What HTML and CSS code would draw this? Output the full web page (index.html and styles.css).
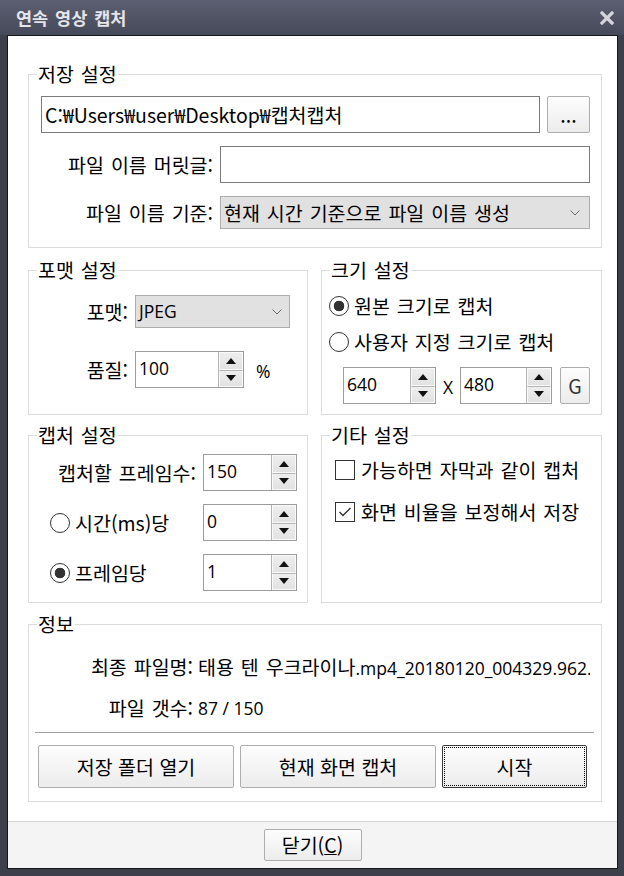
FILE: index.html
```html
<!DOCTYPE html>
<html lang="ko">
<head>
    <meta charset="UTF-8">
    <meta name="viewport" content="width=device-width, initial-scale=1.0">
    <title>연속 영상 캡처</title>
    <link rel="stylesheet" href="styles.css">
</head>
<body>
    <div class="window">
        <div class="titlebar">
            <span class="title">연속 영상 캡처</span>
            <svg class="close" width="14" height="14" viewBox="0 0 14 14">
                <path d="M2 2L12 12M12 2L2 12" stroke="#d4d5db" stroke-width="3.2" stroke-linecap="square"/>
            </svg>
        </div>

        <div class="client">
            <div class="content">
                <!-- 저장 설정 -->
                <fieldset class="group save">
                    <legend>저장 설정</legend>
                    <div class="save-body">
                        <div class="path-row">
                            <div class="textbox">C:₩Users₩user₩Desktop₩캡처캡처</div>
                            <button class="btn dots">...</button>
                        </div>
                        <div class="field-row">
                            <label>파일 이름 머릿글:</label>
                            <div class="textbox"></div>
                        </div>
                        <div class="field-row">
                            <label>파일 이름 기준:</label>
                            <div class="combo">
                                <span>현재 시간 기준으로 파일 이름 생성</span>
                                <svg class="chev" width="10" height="6" viewBox="0 0 10 6"><path d="M0.5 0.5L5 5L9.5 0.5" fill="none" stroke="#6b6b6b" stroke-width="1"/></svg>
                            </div>
                        </div>
                    </div>
                </fieldset>

                <div class="pair first">
                    <!-- 포맷 설정 -->
                    <fieldset class="group">
                        <legend>포맷 설정</legend>
                        <div class="format-body">
                            <label>포맷:</label>
                            <div class="combo small">
                                <span class="en">JPEG</span>
                                <svg class="chev" width="10" height="6" viewBox="0 0 10 6"><path d="M0.5 0.5L5 5L9.5 0.5" fill="none" stroke="#6b6b6b" stroke-width="1"/></svg>
                            </div>
                            <label>품질:</label>
                            <div class="quality">
                                <div class="spin q">
                                    <span class="spin-value">100</span>
                                    <span class="spin-btns"><span><i class="up"></i></span><span><i class="down"></i></span></span>
                                </div>
                                <span class="unit en">%</span>
                            </div>
                        </div>
                    </fieldset>

                    <!-- 크기 설정 -->
                    <fieldset class="group">
                        <legend>크기 설정</legend>
                        <div class="size-body">
                            <div class="option"><span class="radio on"></span><span>원본 크기로 캡처</span></div>
                            <div class="option"><span class="radio"></span><span>사용자 지정 크기로 캡처</span></div>
                            <div class="size-row">
                                <div class="spin w">
                                    <span class="spin-value">640</span>
                                    <span class="spin-btns"><span><i class="up"></i></span><span><i class="down"></i></span></span>
                                </div>
                                <span class="times en">X</span>
                                <div class="spin h">
                                    <span class="spin-value">480</span>
                                    <span class="spin-btns"><span><i class="up"></i></span><span><i class="down"></i></span></span>
                                </div>
                                <button class="btn g en">G</button>
                            </div>
                        </div>
                    </fieldset>
                </div>

                <div class="pair second">
                    <!-- 캡처 설정 -->
                    <fieldset class="group">
                        <legend>캡처 설정</legend>
                        <div class="capture-body">
                            <label>캡처할 프레임수:</label>
                            <div class="spin">
                                <span class="spin-value">150</span>
                                <span class="spin-btns"><span><i class="up"></i></span><span><i class="down"></i></span></span>
                            </div>
                            <div class="option indent"><span class="radio"></span><span>시간(ms)당</span></div>
                            <div class="spin">
                                <span class="spin-value">0</span>
                                <span class="spin-btns"><span><i class="up"></i></span><span><i class="down"></i></span></span>
                            </div>
                            <div class="option indent"><span class="radio on"></span><span>프레임당</span></div>
                            <div class="spin">
                                <span class="spin-value">1</span>
                                <span class="spin-btns"><span><i class="up"></i></span><span><i class="down"></i></span></span>
                            </div>
                        </div>
                    </fieldset>

                    <!-- 기타 설정 -->
                    <fieldset class="group">
                        <legend>기타 설정</legend>
                        <div class="etc-body">
                            <div class="option"><span class="check"></span><span>가능하면 자막과 같이 캡처</span></div>
                            <div class="option">
                                <span class="check">
                                    <svg width="18" height="18" viewBox="0 0 18 18"><path d="M3.5 9L7 12.5L14.5 5" fill="none" stroke="#333" stroke-width="1.4"/></svg>
                                </span>
                                <span>화면 비율을 보정해서 저장</span>
                            </div>
                        </div>
                    </fieldset>
                </div>

                <!-- 정보 -->
                <fieldset class="group info">
                    <legend>정보</legend>
                    <div class="info-body">
                        <div class="info-rows">
                            <span class="info-label">최종 파일명:</span>
                            <span class="info-value">태용 텐 우크라이나<span class="en">.mp4_20180120_004329.962.jpg</span></span>
                            <span class="info-label">파일 갯수:</span>
                            <span class="info-value en">87 / 150</span>
                        </div>
                        <div class="separator"></div>
                        <div class="actions">
                            <button class="btn">저장 폴더 열기</button>
                            <button class="btn">현재 화면 캡처</button>
                            <button class="btn default">시작</button>
                        </div>
                    </div>
                </fieldset>
            </div>

            <div class="footer">
                <button class="btn close-btn">닫기(<u>C</u>)</button>
            </div>
        </div>
    </div>
</body>
</html>
```

FILE: styles.css
```css
* {
    box-sizing: border-box;
}
body {
    margin: 0;
    font-family: "Noto Sans CJK KR", sans-serif;
    font-size: 19.5px;
    line-height: 1.2;
    word-spacing: 1.5px;
    color: #000;
    background: #3d3f4b;
}
/* latin runs are set smaller, like the dialog font does */
.en, .spin-value {
    font-family: "Open Sans", "Noto Sans CJK KR", sans-serif;
    font-size: 17.5px;
    word-spacing: 0;
}
.window {
    width: 624px;
    height: 876px;
    display: flex;
    flex-direction: column;
    padding: 0 6px 7px 7px;
    background: #3d3f4b;
}
.titlebar {
    height: 35px;
    flex: none;
    display: flex;
    align-items: center;
    justify-content: space-between;
    margin: 0 -6px 0 -7px;
    padding: 0 10px 0 16px;
    background: linear-gradient(#5c5f71, #464959);
}
.title {
    color: #e4e5ea;
    font-weight: bold;
    font-size: 17.5px;
    word-spacing: 2px;
    line-height: 20px;
    padding-top: 1px;
}
.client {
    flex: 1;
    display: flex;
    flex-direction: column;
    background: #fff;
    border: 1px solid #15161b;
}
.content {
    flex: 1;
    padding: 27px 15px 0 20px;
}
.footer {
    height: 47px;
    flex: none;
    display: flex;
    justify-content: center;
    padding-top: 7px;
    border-top: 1px solid #d4d4d4;
    background: #f4f4f4;
}

/* group boxes */
.group {
    margin: 0;
    padding: 0;
    min-width: 0;
    border: 1px solid #dcdcdc;
}
.group legend {
    margin-left: 8px;
    padding: 0 1px;
    line-height: 22px;
}
.save {
    margin-bottom: 11px;
}
.pair {
    display: grid;
    grid-template-columns: 280px 1fr;
    column-gap: 13px;
}
.pair.first {
    margin-bottom: 9px;
}
.pair.second {
    margin-bottom: 10px;
}
label {
    text-align: right;
    white-space: nowrap;
}

/* controls */
.textbox {
    height: 37px;
    display: flex;
    align-items: center;
    padding: 0 3px;
    border: 1px solid #7a7a7a;
    background: #fff;
    white-space: nowrap;
    overflow: hidden;
}
.btn {
    font: inherit;
    color: #000;
    padding: 0;
    border: 1px solid #adadad;
    border-radius: 2px;
    background: linear-gradient(#fdfdfd, #ececec);
}
.btn.default {
    border-color: #3a3a3a;
    outline: 1px dotted #000;
    outline-offset: -3px;
}
.combo {
    height: 33px;
    display: flex;
    align-items: center;
    justify-content: space-between;
    padding: 0 9px 0 3px;
    border: 1px solid #adadad;
    background: #e1e1e1;
    white-space: nowrap;
}
.combo.small {
    width: 155px;
    padding-right: 7px;
}
.chev {
    flex: none;
}
.spin {
    height: 37px;
    display: flex;
    border: 1px solid #9d9d9d;
    background: #fff;
}
.spin-value {
    flex: 1;
    display: flex;
    align-items: center;
    padding-left: 3px;
    padding-bottom: 2px;
}
.spin-btns {
    width: 25px;
    display: flex;
    flex-direction: column;
    border-left: 1px solid #b4b4b4;
}
.spin-btns span {
    flex: 1;
    display: flex;
    align-items: center;
    justify-content: center;
    background: linear-gradient(#eeeeee, #e2e2e2);
    border: 1px solid #fafafa;
}
.spin-btns span + span {
    border-top: 1px solid #b4b4b4;
}
.up, .down {
    width: 0;
    height: 0;
    border-left: 5px solid transparent;
    border-right: 5px solid transparent;
}
.up {
    border-bottom: 6px solid #111;
}
.down {
    border-top: 6px solid #111;
}
.option {
    height: 24px;
    display: flex;
    align-items: center;
    gap: 5px;
    white-space: nowrap;
}
.radio {
    width: 20px;
    height: 20px;
    flex: none;
    border: 1px solid #333;
    border-radius: 50%;
    background: #fff;
}
.radio.on {
    background: radial-gradient(circle, #333 0 5px, #fff 5.6px);
}
.check {
    width: 20px;
    height: 20px;
    flex: none;
    display: flex;
    align-items: center;
    justify-content: center;
    border: 1px solid #333;
    background: #fff;
}

/* 저장 설정 */
.save-body {
    display: flex;
    flex-direction: column;
    gap: 13px;
    padding: 11px 11px 18px 12px;
}
.path-row {
    display: flex;
    gap: 7px;
}
.path-row .textbox {
    flex: 1;
}
.dots {
    width: 43px;
    height: 37px;
}
.field-row {
    display: grid;
    grid-template-columns: 172px 1fr;
    column-gap: 7px;
    align-items: center;
}

/* 포맷 설정 */
.format-body {
    display: grid;
    grid-template-columns: 87px auto;
    column-gap: 7px;
    row-gap: 23px;
    align-items: center;
    justify-content: start;
    padding: 14px 10px 26px 12px;
}
.quality {
    display: flex;
    align-items: center;
    gap: 12px;
}
.spin.q {
    width: 109px;
}
.unit {
    padding-top: 4px;
}

/* 크기 설정 */
.size-body {
    display: flex;
    flex-direction: column;
    padding: 13px 10px 10px 7px;
}
.size-body .option + .option {
    margin-top: 12px;
}
.size-row {
    display: flex;
    align-items: center;
    margin: 13px 0 0 14px;
}
.spin.w {
    width: 93px;
}
.spin.h {
    width: 92px;
}
.times {
    width: 24px;
    text-align: center;
    padding-top: 4px;
}
.btn.g {
    width: 30px;
    height: 37px;
    margin-left: 8px;
    color: #333;
}

/* 캡처 설정 */
.capture-body {
    display: grid;
    grid-template-columns: 1fr 94px;
    column-gap: 7px;
    row-gap: 13px;
    align-items: center;
    padding: 8px 10px 11px 12px;
}
.option.indent {
    padding-left: 9px;
}

/* 기타 설정 */
.etc-body {
    display: flex;
    flex-direction: column;
    gap: 18px;
    padding: 12px 10px 10px 13px;
}
.etc-body .option {
    gap: 6px;
}

/* 정보 */
.info-body {
    padding: 18px 7px 13px 6px;
}
.info-rows {
    display: grid;
    grid-template-columns: 158px 1fr;
    column-gap: 5px;
    row-gap: 12px;
    padding-right: 4px;
}
.info-label {
    text-align: right;
    line-height: 28px;
    white-space: nowrap;
}
.info-value {
    line-height: 28px;
    white-space: nowrap;
    overflow: hidden;
}
.separator {
    height: 1px;
    margin-top: 10px;
    background: #a0a0a0;
}
.actions {
    display: grid;
    grid-template-columns: 196px 196px 1fr;
    gap: 6px;
    margin: 12px 7px 0 3px;
}
.actions .btn {
    height: 43px;
}
.close-btn {
    width: 98px;
    height: 32px;
}
```
